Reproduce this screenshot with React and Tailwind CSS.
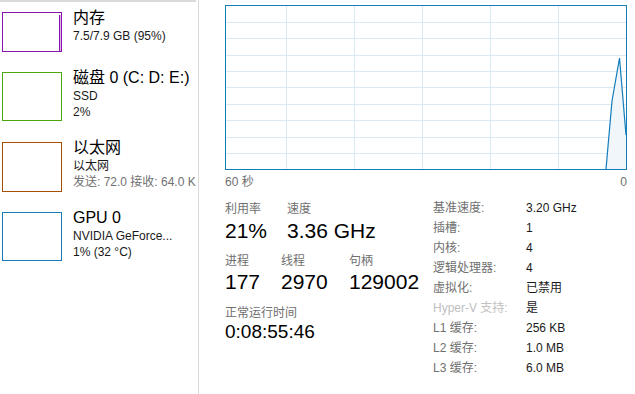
export default function App() {
  const font = "font-['Liberation_Sans','Noto_Sans_CJK_SC',sans-serif]";
  const items = [
    { color: "border-[#8b12ae]", h: "h-[60px]", box: "h-[40px]", title: "内存", lines: [["7.5/7.9 GB (95%)", "text-[#1a1a1a]"]], mem: true },
    { color: "border-[#4da60c]", h: "h-[70px]", box: "h-[49px]", title: "磁盘 0 (C: D: E:)", lines: [["SSD", "text-[#1a1a1a]"], ["2%", "text-[#1a1a1a]"]] },
    { color: "border-[#a74f01]", h: "h-[70px]", box: "h-[50px]", title: "以太网", lines: [["以太网", "text-[#1a1a1a]"], ["发送: 72.0 接收: 64.0 Kbps", "text-[#707070]"]] },
    { color: "border-[#1b7ab8]", h: "h-[70px]", box: "h-[49px]", title: "GPU 0", lines: [["NVIDIA GeForce...", "text-[#1a1a1a]"], ["1% (32 °C)", "text-[#1a1a1a]"]] },
  ];
  const table = [
    ["基准速度:", "3.20 GHz"],
    ["插槽:", "1"],
    ["内核:", "4"],
    ["逻辑处理器:", "4"],
    ["虚拟化:", "已禁用"],
    ["Hyper-V 支持:", "是", true],
    ["L1 缓存:", "256 KB"],
    ["L2 缓存:", "1.0 MB"],
    ["L3 缓存:", "6.0 MB"],
  ];
  const vx = [60, 128, 196, 264, 332];
  const hy = [16, 32, 49, 65, 81, 98, 114, 131, 147];
  return (
    <div className={`${font} w-[635px] h-[394px] bg-white flex overflow-hidden text-black`}>
      <div className="w-[199px] h-full flex flex-col border-r border-[#d9d9d9] shrink-0">
        <div className="w-[196px] h-[2px] bg-[#dadada]" />
        <div className="w-[196px] overflow-hidden flex flex-col pt-[10px]">
          {items.map((it, i) => (
            <div key={i} className={`${it.h} flex items-start shrink-0`}>
              <div className={`ml-[2px] w-[60px] ${it.box} border ${it.color} shrink-0 flex justify-end`}>
                {it.mem && (
                  <div className="mt-[2px] h-[calc(100%-2px)] w-[2px] bg-[#dcb8e6] border-l border-[#8b12ae]" />
                )}
              </div>
              <div className="ml-[11px] mt-[-4px] flex flex-col whitespace-nowrap">
                <div className="text-[16px] leading-[20px]">{it.title}</div>
                {it.lines.map(([t, c], j) => (
                  <div key={j} className={`text-[12px] leading-[16px] ${c}`}>{t}</div>
                ))}
              </div>
            </div>
          ))}
        </div>
      </div>
      <div className="flex-1 flex flex-col pl-[26px] pt-[5px]">
        <div className="w-[402px] h-[165px] border border-[#117dbb] shrink-0">
          <svg width="400" height="163" viewBox="0 0 400 163" className="block">
            {vx.map((x) => (
              <line key={x} x1={x + 0.5} y1="0" x2={x + 0.5} y2="163" stroke="#d9eaf4" strokeWidth="1" />
            ))}
            {hy.map((y) => (
              <line key={y} x1="0" y1={y + 0.5} x2="400" y2={y + 0.5} stroke="#d9eaf4" strokeWidth="1" />
            ))}
            <polygon points="380,163 386,95 393.5,52 400,129 400,163" fill="#f1f6fa" />
            <polyline points="380,163 386,95 393.5,52 400,129" fill="none" stroke="#117dbb" strokeWidth="1.2" />
          </svg>
        </div>
        <div className="w-[402px] mt-[4px] flex justify-between text-[12px] leading-[16px] text-[#707070]">
          <span>60 秒</span>
          <span>0</span>
        </div>
        <div className="flex items-start">
          <div className="w-[208px] mt-[11px] flex flex-col">
            <div className="flex text-[12px] leading-[16px] text-[#707070]">
              <span className="w-[62px]">利用率</span>
              <span>速度</span>
            </div>
            <div className="flex text-[21px] leading-[24px] mt-[2px]">
              <span className="w-[62px]">21%</span>
              <span>3.36 GHz</span>
            </div>
            <div className="flex text-[12px] leading-[16px] text-[#707070] mt-[10px]">
              <span className="w-[56px]">进程</span>
              <span className="w-[68px]">线程</span>
              <span>句柄</span>
            </div>
            <div className="flex text-[21px] leading-[24px] mt-[1px]">
              <span className="w-[56px]">177</span>
              <span className="w-[68px]">2970</span>
              <span>129002</span>
            </div>
            <div className="text-[12px] leading-[16px] text-[#707070] mt-[11px]">正常运行时间</div>
            <div className="text-[19px] leading-[22px]">0:08:55:46</div>
          </div>
          <div className="mt-[8px] grid grid-cols-[93px_auto] text-[12px] leading-[20px]">
            {table.map(([k, v, dim], i) => (
              <div key={i} className="contents">
                <span className={dim ? "text-[#c0c0c0]" : "text-[#707070]"}>{k}</span>
                <span className="text-[#1a1a1a]">{v}</span>
              </div>
            ))}
          </div>
        </div>
      </div>
    </div>
  );
}
